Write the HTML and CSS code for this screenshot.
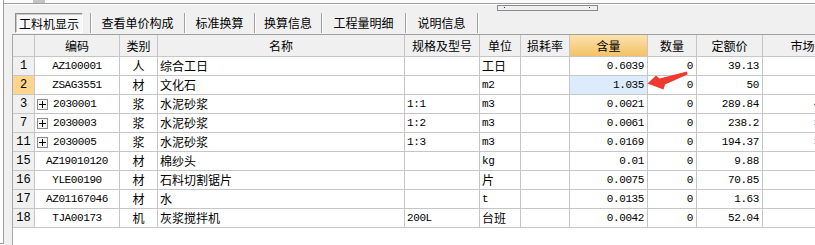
FILE: index.html
```html
<!DOCTYPE html>
<html lang="zh">
<head>
<meta charset="utf-8">
<title>工料机显示</title>
<link rel="stylesheet" href="styles.css">
</head>
<body>
<div class="app">
  <div class="side"></div>
  <div class="main">
    <div class="topstrip"><span class="thumb"></span></div>
    <div class="toolbar">
      <div class="splitter"><i class="dot"></i><i class="dot dot2"></i></div>
      <div class="tabs">
        <div class="tab active">工料机显示</div>
        <div class="tab t2">查看单价构成</div>
        <div class="tab t3">标准换算</div>
        <div class="tab t4">换算信息</div>
        <div class="tab t5">工程量明细</div>
        <div class="tab t6">说明信息</div>
        <div class="tab tend"></div>
      </div>
    </div>
    <div class="grid">
      <div class="row head">
        <div class="c num"></div>
        <div class="c ctr">编码</div>
        <div class="c ctr">类别</div>
        <div class="c ctr">名称</div>
        <div class="c ctr">规格及型号</div>
        <div class="c ctr">单位</div>
        <div class="c ctr">损耗率</div>
        <div class="c ctr hl">含量</div>
        <div class="c ctr">数量</div>
        <div class="c ctr">定额价</div>
        <div class="c ctr">市场价</div>
      </div>

      <div class="row">
        <div class="c num">1</div>
        <div class="c code">AZ100001</div>
        <div class="c ctr">人</div>
        <div class="c txt">综合工日</div>
        <div class="c mono"></div>
        <div class="c txt">工日</div>
        <div class="c"></div>
        <div class="c mono r">0.6039</div>
        <div class="c mono r">0</div>
        <div class="c mono r">39.13</div>
        <div class="c mono r"></div>
      </div>

      <div class="row">
        <div class="c num sel">2</div>
        <div class="c code">ZSAG3551</div>
        <div class="c ctr">材</div>
        <div class="c txt">文化石</div>
        <div class="c mono"></div>
        <div class="c mono">m2</div>
        <div class="c"></div>
        <div class="c mono r cur">1.035</div>
        <div class="c mono r">0</div>
        <div class="c mono r">50</div>
        <div class="c mono r"></div>
      </div>

      <div class="row">
        <div class="c num">3</div>
        <div class="c code tree"><span class="plus"></span>2030001</div>
        <div class="c ctr">浆</div>
        <div class="c txt">水泥砂浆</div>
        <div class="c mono">1:1</div>
        <div class="c mono">m3</div>
        <div class="c"></div>
        <div class="c mono r">0.0021</div>
        <div class="c mono r">0</div>
        <div class="c mono r">289.84</div>
        <div class="c mono r blue">417.62</div>
      </div>

      <div class="row">
        <div class="c num">7</div>
        <div class="c code tree"><span class="plus"></span>2030003</div>
        <div class="c ctr">浆</div>
        <div class="c txt">水泥砂浆</div>
        <div class="c mono">1:2</div>
        <div class="c mono">m3</div>
        <div class="c"></div>
        <div class="c mono r">0.0061</div>
        <div class="c mono r">0</div>
        <div class="c mono r">238.2</div>
        <div class="c mono r blue">366.01</div>
      </div>

      <div class="row">
        <div class="c num">11</div>
        <div class="c code tree"><span class="plus"></span>2030005</div>
        <div class="c ctr">浆</div>
        <div class="c txt">水泥砂浆</div>
        <div class="c mono">1:3</div>
        <div class="c mono">m3</div>
        <div class="c"></div>
        <div class="c mono r">0.0169</div>
        <div class="c mono r">0</div>
        <div class="c mono r">194.37</div>
        <div class="c mono r blue">322.18</div>
      </div>

      <div class="row">
        <div class="c num">15</div>
        <div class="c code">AZ19010120</div>
        <div class="c ctr">材</div>
        <div class="c txt">棉纱头</div>
        <div class="c mono"></div>
        <div class="c mono">kg</div>
        <div class="c"></div>
        <div class="c mono r">0.01</div>
        <div class="c mono r">0</div>
        <div class="c mono r">9.88</div>
        <div class="c mono r"></div>
      </div>

      <div class="row">
        <div class="c num">16</div>
        <div class="c code">YLE00190</div>
        <div class="c ctr">材</div>
        <div class="c txt">石料切割锯片</div>
        <div class="c mono"></div>
        <div class="c txt">片</div>
        <div class="c"></div>
        <div class="c mono r">0.0075</div>
        <div class="c mono r">0</div>
        <div class="c mono r">70.85</div>
        <div class="c mono r"></div>
      </div>

      <div class="row">
        <div class="c num">17</div>
        <div class="c code">AZ01167046</div>
        <div class="c ctr">材</div>
        <div class="c txt">水</div>
        <div class="c mono"></div>
        <div class="c mono">t</div>
        <div class="c"></div>
        <div class="c mono r">0.0135</div>
        <div class="c mono r">0</div>
        <div class="c mono r">1.63</div>
        <div class="c mono r"></div>
      </div>

      <div class="row">
        <div class="c num">18</div>
        <div class="c code">TJA00173</div>
        <div class="c ctr">机</div>
        <div class="c txt">灰浆搅拌机</div>
        <div class="c mono">200L</div>
        <div class="c txt">台班</div>
        <div class="c"></div>
        <div class="c mono r">0.0042</div>
        <div class="c mono r">0</div>
        <div class="c mono r">52.04</div>
        <div class="c mono r"></div>
      </div>

      <svg class="arrow" width="815" height="245" viewBox="0 0 815 245">
        <polygon points="647.5,83.5 656,75.5 659.5,78.5 687,71.5 687.5,74.5 665,84.5 663.5,89.5" fill="#ee3a2f"/>
      </svg>
    </div>
  </div>
</div>
</body>
</html>
```

FILE: styles.css
```css
* { box-sizing: border-box; }

html, body {
  margin: 0;
  padding: 0;
}

body {
  width: 815px;
  height: 245px;
  overflow: hidden;
  background: #ffffff;
  font-family: "Noto Sans CJK SC", "Noto Sans", sans-serif;
  font-size: 12px;
  color: #000;
}

.app {
  display: flex;
  height: 245px;
}

.side {
  flex: 0 0 4px;
  height: 244px;
  background: #ffffff;
  border-right: 1px solid #a0a0a0;
  border-bottom: 1px solid #a0a0a0;
}

.main {
  flex: 1;
  min-width: 0;
  display: flex;
  flex-direction: column;
  background: #f0f0f0;
}

.topstrip {
  height: 4px;
  background: #fbfbfb;
  border-bottom: 1px solid #a0a0a0;
  display: flex;
}

.thumb {
  margin-left: 29px;
  width: 12px;
  height: 3px;
  background: #c4c4c4;
}

.toolbar {
  height: 30px;
  display: flex;
  flex-direction: column;
  border-top: 1px solid #ffffff;
}

.splitter {
  margin-top: 0;
  margin-left: 493px;
  width: 101px;
  height: 6px;
  border: 1px solid #8a8a8a;
  display: flex;
  align-items: flex-start;
  padding-top: 1px;
  padding-left: 6px;
}

.dot {
  display: block;
  width: 1px;
  height: 1px;
  background: #2020c0;
}

.dot2 {
  margin-left: 84px;
}

.tabs {
  margin-top: 2px;
  margin-left: 11px;
  height: 20px;
  display: flex;
}

.tab {
  height: 20px;
  line-height: 19px;
  text-align: center;
  white-space: nowrap;
  font-size: 12px;
  border-left: 1px solid #a0a0a0;
  box-shadow: inset 1px 0 0 #ffffff;
}

.tab.active {
  width: 68px;
  margin-right: 7px;
  border: 1px solid;
  border-color: #8c8c8c #ffffff #ffffff #8c8c8c;
  box-shadow: inset 1px 1px 0 #c8c8c8;
  background: #f8f8f8;
}

.t2 { width: 94px; }
.t3 { width: 70px; }
.t4 { width: 67px; }
.t5 { width: 84px; }
.t6 { width: 72px; }
.tend { width: 2px; }

.grid {
  position: relative;
  flex: 1;
  margin-left: 8px;
  border-left: 1px solid #a8a8a8;
  border-top: 1px solid #a0a0a0;
  background: #ffffff;
  overflow: hidden;
}

.row {
  display: grid;
  grid-template-columns: 22px 85px 38px 247px 75px 41px 49px 78px 49px 66px 92px;
  height: 19px;
}

.row.head {
  height: 22px;
  background: #f0f0f0;
}

.c {
  border-right: 1px solid #c6c6c6;
  border-bottom: 1px solid #c6c6c6;
  line-height: 18px;
  white-space: nowrap;
  overflow: hidden;
  padding: 0 2px;
}

.head .c {
  line-height: 21px;
  font-size: 12px;
}

.ctr { text-align: center; }

.hl {
  background: linear-gradient(#fde2ad, #f3c265);
}

.num {
  background: #f0f0f0;
  text-align: center;
  font-family: "Liberation Mono", monospace;
  font-size: 12px;
  padding: 0;
}

.num.sel {
  background: #fdd58d;
}

.txt {
  text-align: left;
}

.mono {
  font-family: "Liberation Mono", monospace;
  font-size: 11px;
  letter-spacing: -0.4px;
}

.code {
  font-family: "Liberation Mono", monospace;
  font-size: 11px;
  letter-spacing: -0.4px;
  text-align: center;
}

.code.tree {
  text-align: left;
  display: flex;
  align-items: center;
  padding-left: 2px;
}

.plus {
  position: relative;
  flex: 0 0 11px;
  width: 11px;
  height: 11px;
  margin-right: 5px;
  border: 1px solid #8a8a8a;
  background: #f4f4f4;
}

.plus::before,
.plus::after {
  content: "";
  position: absolute;
  background: #000;
}

.plus::before {
  left: 1px;
  top: 4px;
  width: 7px;
  height: 1px;
}

.plus::after {
  left: 4px;
  top: 1px;
  width: 1px;
  height: 7px;
}

.r {
  text-align: right;
  padding-right: 3px;
}

.cur {
  background: #ddecfc;
}

.blue {
  color: #0000ff;
}

.arrow {
  position: absolute;
  left: -13px;
  top: -35px;
  pointer-events: none;
}
```
